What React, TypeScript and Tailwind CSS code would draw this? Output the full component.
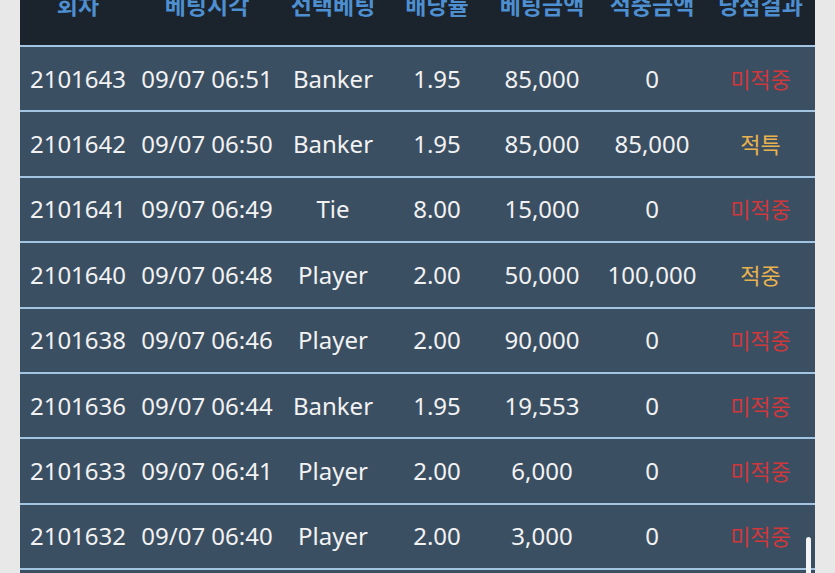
const rows = [
  { id: "2101643", time: "09/07 06:51", pick: "Banker", odds: "1.95", bet: "85,000", win: "0", result: "미적중" },
  { id: "2101642", time: "09/07 06:50", pick: "Banker", odds: "1.95", bet: "85,000", win: "85,000", result: "적특" },
  { id: "2101641", time: "09/07 06:49", pick: "Tie", odds: "8.00", bet: "15,000", win: "0", result: "미적중" },
  { id: "2101640", time: "09/07 06:48", pick: "Player", odds: "2.00", bet: "50,000", win: "100,000", result: "적중" },
  { id: "2101638", time: "09/07 06:46", pick: "Player", odds: "2.00", bet: "90,000", win: "0", result: "미적중" },
  { id: "2101636", time: "09/07 06:44", pick: "Banker", odds: "1.95", bet: "19,553", win: "0", result: "미적중" },
  { id: "2101633", time: "09/07 06:41", pick: "Player", odds: "2.00", bet: "6,000", win: "0", result: "미적중" },
  { id: "2101632", time: "09/07 06:40", pick: "Player", odds: "2.00", bet: "3,000", win: "0", result: "미적중" },
  { id: "2101631", time: "09/07 06:39", pick: "Player", odds: "2.00", bet: "3,000", win: "0", result: "미적중" },
];

const headers = ["회차", "베팅시각", "선택베팅", "배당률", "베팅금액", "적중금액", "당첨결과"];

// column widths, total 795
const cols = "grid grid-cols-[116px_142px_110px_98px_112px_108px_109px]";

const App: React.FC = () => {
  return (
    <div
      className="relative w-[835px] h-[573px] overflow-hidden bg-[#e8e8e8]"
      style={{ fontFamily: '"Noto Sans", "Noto Sans CJK KR", sans-serif' }}
    >
      {/* table is scrolled so the header text sits half off the top */}
      <div className="ml-[20px] w-[795px] -mt-[20px]">
        {/* header */}
        <div className={`${cols} h-[65px] bg-[#1b232c] text-[#4d8fd1] font-bold text-[23px] leading-[30px]`}>
          {headers.map((h) => (
            <div key={h} className="text-center pt-[10px]">
              {h}
            </div>
          ))}
        </div>

        {/* rows */}
        {rows.map((r) => (
          <div
            key={r.id}
            className={`${cols} h-[65.4px] items-center border-t-2 border-[#a3c5e2] bg-[#3b4f63] text-[#f2f2f2] text-[24px] leading-[30px]`}
          >
            <div className="text-center">{r.id}</div>
            <div className="text-center">{r.time}</div>
            <div className="text-center">{r.pick}</div>
            <div className="text-center">{r.odds}</div>
            <div className="text-center">{r.bet}</div>
            <div className="text-center">{r.win}</div>
            <div
              className={
                r.result === "미적중"
                  ? "text-center text-[22px] text-[#cf383b]"
                  : "text-center text-[22px] text-[#e8b24e]"
              }
            >
              {r.result}
            </div>
          </div>
        ))}
      </div>

      {/* scrollbar thumb */}
      <div className="absolute left-[806px] top-[537px] w-[5px] h-[60px] rounded-full bg-[#f4f4f4]" />
    </div>
  );
};

export default App;
